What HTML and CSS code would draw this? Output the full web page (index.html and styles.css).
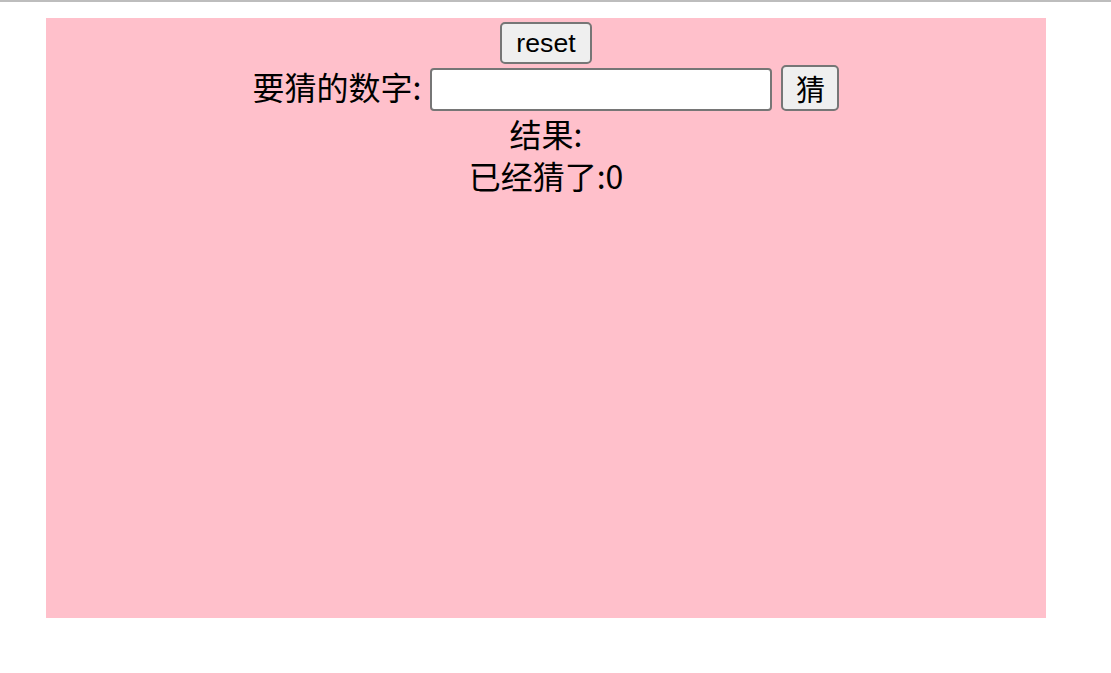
FILE: index.html
```html
<!DOCTYPE html>
<html>
<head>
<meta charset="utf-8">
<link rel="stylesheet" href="styles.css">
</head>
<body>
<div class="topline"></div>
<div class="game">
  <div class="row row-reset"><button class="btn btn-reset">reset</button></div>
  <div class="row row-guess">
    <span class="label">要猜的数字:</span>
    <input class="num" type="text">
    <button class="btn btn-guess">猜</button>
  </div>
  <div class="text result">结果:</div>
  <div class="text count">已经猜了:0</div>
</div>
</body>
</html>
```
FILE: styles.css
```css
html, body {
  margin: 0;
  padding: 0;
  background: #ffffff;
}
body {
  font-family: "Noto Sans CJK SC", "Liberation Sans", sans-serif;
  color: #000;
}
.topline {
  height: 2px;
  background: #bdbdbd;
}
.game {
  width: 1000px;
  height: 600px;
  margin: 16px 0 0 46px;
  background: #ffc0cb;
  display: flex;
  flex-direction: column;
  align-items: center;
}
.row {
  display: flex;
  align-items: flex-end;
  justify-content: center;
}
.row-reset {
  padding-top: 4px;
}
.btn {
  font-family: "Liberation Sans", "Noto Sans CJK SC", sans-serif;
  font-size: 26.67px;
  background: #efefef;
  border: 2px solid #767676;
  border-radius: 5px;
  color: #000;
  padding: 0;
  margin: 0;
  box-sizing: border-box;
}
.btn-reset {
  width: 92px;
  height: 42px;
  line-height: 36px;
}
.row-guess {
  margin-top: 1px;
  height: 46px;
}
.label {
  font-size: 32px;
  line-height: 42px;
  height: 42px;
  margin-right: 9px;
  position: relative;
  top: -4px;
}
.num {
  width: 342px;
  height: 43px;
  box-sizing: border-box;
  border: 2px solid #767676;
  border-radius: 4px;
  background: #fff;
  margin: 0 9px 0 0;
  padding: 0;
}
.btn-guess {
  width: 58px;
  height: 46px;
  font-family: "Noto Sans CJK SC", sans-serif;
  font-size: 29px;
  line-height: 40px;
}
.text {
  font-size: 32px;
  line-height: 42px;
}
.result {
  margin-top: 1px;
}
```
